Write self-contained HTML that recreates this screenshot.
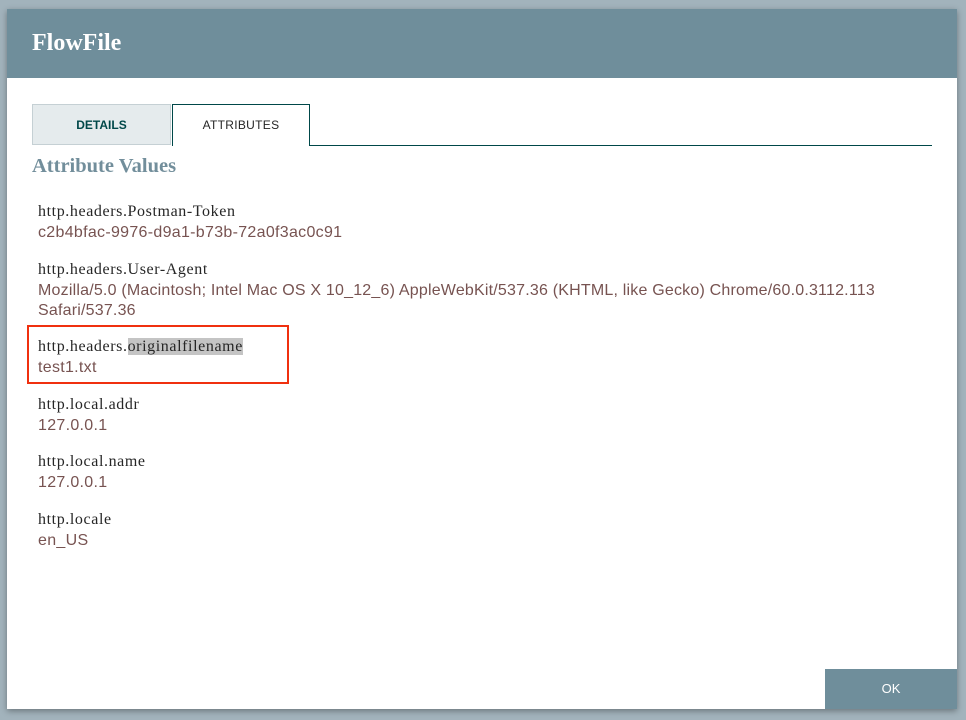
<!DOCTYPE html>
<html><head><style>
body{margin:0;width:966px;height:720px;background:#a2b3bc;position:relative;overflow:hidden;font-family:"Liberation Sans",sans-serif}
.dlg{position:absolute;left:7px;top:9px;width:950px;height:700px;background:#fff;box-shadow:0 2px 6px rgba(0,0,0,.35)}
.hdr{position:absolute;left:0;top:0;width:950px;height:69px;background:#6f8e9b}
.hdr span{position:absolute;left:25px;top:21px;font-family:"Liberation Serif",serif;font-weight:bold;font-size:24px;color:#fff}
.tab{position:absolute;top:95px;height:41px;font-size:12px;text-align:center;line-height:41px;box-sizing:border-box}
.t1{left:25px;width:139px;background:#e5ebed;border:1px solid #c5d0d4;color:#004849;font-weight:bold}
.t2{left:165px;width:138px;background:#fff;border:1px solid #004849;border-bottom:none;height:42px;color:#262626;letter-spacing:0.3px}
.line{position:absolute;left:303px;top:136px;width:622px;height:1px;background:#004849}
.title{position:absolute;left:25px;top:146px;font-family:"Liberation Serif",serif;font-weight:bold;font-size:20.5px;color:#728e9b}
.n{position:absolute;left:31px;font-family:"Liberation Serif",serif;font-size:16px;letter-spacing:0.6px;color:#262626;line-height:21px;white-space:nowrap}
.v{position:absolute;left:31px;font-size:16px;letter-spacing:0.3px;color:#775351;line-height:20px;white-space:nowrap}
.hl{background:#c4c4c4}
.box{position:absolute;left:20px;top:316px;width:258px;height:55px;border:2px solid #f0300f}
.ok{position:absolute;left:818px;top:660px;width:132px;height:40px;background:#6f8e9b;color:#fff;font-size:13px;text-align:center;line-height:40px}
</style></head><body>
<div class="dlg">
<div class="hdr"><span>FlowFile</span></div>
<div class="tab t1">DETAILS</div>
<div class="tab t2">ATTRIBUTES</div>
<div class="line"></div>
<div class="title">Attribute Values</div>
<div class="n" style="top:192px">http.headers.Postman-Token</div>
<div class="v" style="top:214px">c2b4bfac-9976-d9a1-b73b-72a0f3ac0c91</div>
<div class="n" style="top:250px">http.headers.User-Agent</div>
<div class="v" style="top:272px;letter-spacing:0.2px">Mozilla/5.0 (Macintosh; Intel Mac OS X 10_12_6) AppleWebKit/537.36 (KHTML, like Gecko) Chrome/60.0.3112.113<br>Safari/537.36</div>
<div class="box"></div>
<div class="n" style="top:327px">http.headers.<span class="hl">originalfilename</span></div>
<div class="v" style="top:349px">test1.txt</div>
<div class="n" style="top:385px">http.local.addr</div>
<div class="v" style="top:407px">127.0.0.1</div>
<div class="n" style="top:442px">http.local.name</div>
<div class="v" style="top:464px">127.0.0.1</div>
<div class="n" style="top:500px">http.locale</div>
<div class="v" style="top:522px">en_US</div>
<div class="ok">OK</div>
</div>
</body></html>
